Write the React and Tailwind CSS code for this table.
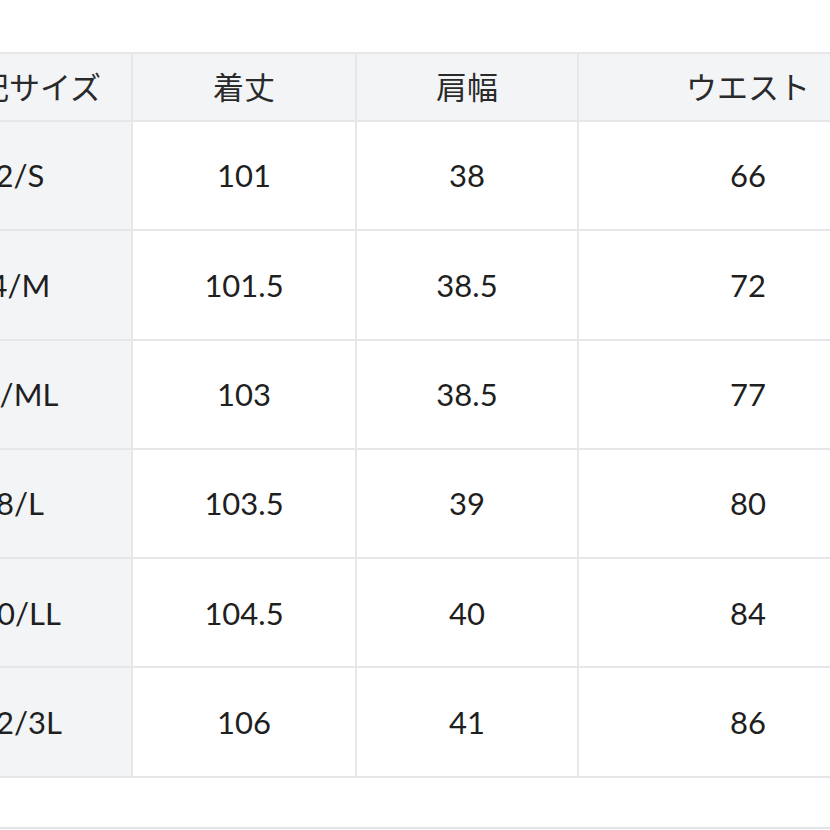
import React from "react";

const header = ["表記サイズ", "着丈", "肩幅", "ウエスト"];
const rows = [
  ["2/S", "101", "38", "66"],
  ["4/M", "101.5", "38.5", "72"],
  ["6/ML", "103", "38.5", "77"],
  ["8/L", "103.5", "39", "80"],
  ["10/LL", "104.5", "40", "84"],
  ["12/3L", "106", "41", "86"],
];

const colW = ["w-[224px]", "w-[224px]", "w-[222px]", "w-[340px]"];

export default function App() {
  return (
    <div
      className="w-[830px] h-[830px] overflow-hidden bg-white relative"
      style={{ fontFamily: 'Lato, "Noto Sans CJK JP", sans-serif' }}
    >
      <div className="pt-[52px] ml-[-91px] flex flex-col">
        <div className="flex border-t-2 border-b-2 border-[#e6e7e9] bg-[#f3f4f6] h-[70px]">
          {header.map((h, i) => (
            <div
              key={i}
              className={`${colW[i]} shrink-0 flex items-center justify-center border-r-2 border-[#e6e7e9] text-[31px] text-[#2a2a2a] ${i === 0 ? "pl-[8px]" : ""}`}
            >
              {h}
            </div>
          ))}
        </div>
        {rows.map((r, ri) => (
          <div key={ri} className="flex border-b-2 border-[#e6e7e9] h-[109.3px]">
            {r.map((c, i) => (
              <div
                key={i}
                className={`${colW[i]} shrink-0 flex items-center justify-center border-r-2 border-[#e6e7e9] text-[31px] text-[#1f1f1f] ${i === 0 ? "bg-[#f3f4f6]" : "bg-white"}`}
              >
                {c}
              </div>
            ))}
          </div>
        ))}
      </div>
      <div className="absolute left-0 right-0 top-[827px] h-[2px] bg-[#e3e4e6]" />
    </div>
  );
}
